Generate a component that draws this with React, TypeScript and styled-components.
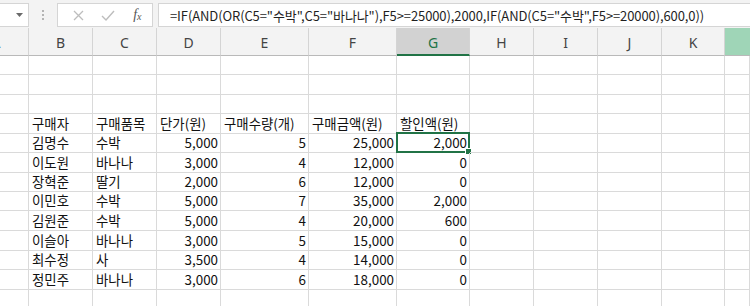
import styled, { createGlobalStyle, css } from 'styled-components';

const GlobalStyle = createGlobalStyle`
  html, body {
    margin: 0;
    padding: 0;
    background: #ffffff;
  }
  body {
    font-family: "Noto Sans CJK KR", "Noto Sans", sans-serif;
  }
`;

const COLUMNS = [
  { key: 'A', width: '29px' },
  { key: 'B', width: '64px' },
  { key: 'C', width: '64px' },
  { key: 'D', width: '64px' },
  { key: 'E', width: '88px' },
  { key: 'F', width: '88px' },
  { key: 'G', width: '73px' },
  { key: 'H', width: '64px' },
  { key: 'I', width: '64px' },
  { key: 'J', width: '64px' },
  { key: 'K', width: '63px' },
  { key: 'L', width: '1fr' },
];

const ROW_HEIGHTS = [19, 20, 19, 20, 19, 20, 19, 19, 20, 20, 19, 20, 20];

const FORMULA =
  '=IF(AND(OR(C5="수박",C5="바나나"),F5>=25000),2000,IF(AND(C5="수박",F5>=20000),600,0))';

type Align = 'left' | 'right';

interface CellData {
  text: string;
  align: Align;
}

const HEADERS = ['구매자', '구매품목', '단가(원)', '구매수량(개)', '구매금액(원)', '할인액(원)'];

const RECORDS: [string, string, string, string, string, string][] = [
  ['김명수', '수박', '5,000', '5', '25,000', '2,000'],
  ['이도원', '바나나', '3,000', '4', '12,000', '0'],
  ['장혁준', '딸기', '2,000', '6', '12,000', '0'],
  ['이민호', '수박', '5,000', '7', '35,000', '2,000'],
  ['김원준', '수박', '5,000', '4', '20,000', '600'],
  ['이슬아', '바나나', '3,000', '5', '15,000', '0'],
  ['최수정', '사', '3,500', '4', '14,000', '0'],
  ['정민주', '바나나', '3,000', '6', '18,000', '0'],
];

// row number (1-based) -> cells in columns B..G
function buildRows(): Record<number, CellData[]> {
  const rows: Record<number, CellData[]> = {};
  rows[4] = HEADERS.map((text) => ({ text, align: 'left' as Align }));
  RECORDS.forEach((rec, i) => {
    rows[5 + i] = rec.map((text, c) => ({ text, align: (c < 2 ? 'left' : 'right') as Align }));
  });
  return rows;
}

const ROWS = buildRows();

function CancelIcon() {
  return (
    <svg width="11" height="11" viewBox="0 0 11 11">
      <path d="M1 1 L10 10 M10 1 L1 10" stroke="#bdbdbd" strokeWidth="1.3" fill="none" />
    </svg>
  );
}

function EnterIcon() {
  return (
    <svg width="14" height="11" viewBox="0 0 14 11">
      <path d="M1 6 L5 10 L13 1" stroke="#bdbdbd" strokeWidth="1.4" fill="none" />
    </svg>
  );
}

function DropArrow() {
  return (
    <svg width="7" height="4" viewBox="0 0 7 4">
      <path d="M0 0 L7 0 L3.5 4 Z" fill="#6a6a6a" />
    </svg>
  );
}

export default function App() {
  return (
    <>
      <GlobalStyle />
      <Window>
        <FormulaBar>
          <NameBox>
            <DropArrow />
          </NameBox>
          <Grip>
            <span />
            <span />
            <span />
          </Grip>
          <ActionBox>
            <ActionButton>
              <CancelIcon />
            </ActionButton>
            <ActionButton>
              <EnterIcon />
            </ActionButton>
            <ActionButton>
              <Fx>
                f<sub>x</sub>
              </Fx>
            </ActionButton>
          </ActionBox>
          <FormulaInput>{FORMULA}</FormulaInput>
        </FormulaBar>

        <Sheet>
          {COLUMNS.map((col) => (
            <ColHeader
              key={col.key}
              $selected={col.key === 'G'}
              $highlight={col.key === 'L'}
              $clipped={col.key === 'A'}
            >
              {col.key === 'A' ? <ClippedLabel>A</ClippedLabel> : col.key === 'L' ? null : col.key}
            </ColHeader>
          ))}
          {ROW_HEIGHTS.map((_, r) => {
            const rowNum = r + 1;
            const data = ROWS[rowNum];
            return COLUMNS.map((col, c) => {
              const cell = data && c >= 1 && c <= 6 ? data[c - 1] : undefined;
              const active = rowNum === 5 && col.key === 'G';
              return (
                <Cell key={`${rowNum}-${col.key}`} $align={cell ? cell.align : 'left'}>
                  {cell ? cell.text : null}
                  {active && (
                    <Selection>
                      <FillHandle />
                    </Selection>
                  )}
                </Cell>
              );
            });
          })}
        </Sheet>
      </Window>
    </>
  );
}

const Window = styled.div`
  width: 750px;
  height: 306px;
  overflow: hidden;
  background: #ffffff;
`;

const FormulaBar = styled.div`
  display: flex;
  align-items: stretch;
  height: 28px;
  box-sizing: border-box;
  padding: 3px 0 1px 0;
  background: #f3f3f3;
`;

const NameBox = styled.div`
  width: 29px;
  box-sizing: border-box;
  background: #ffffff;
  border: 1px solid #d5d5d5;
  border-left: none;
  display: flex;
  align-items: center;
  justify-content: flex-end;
  padding-right: 5px;
  padding-bottom: 1px;
`;

const Grip = styled.div`
  width: 28px;
  display: flex;
  flex-direction: column;
  align-items: center;
  justify-content: center;
  gap: 2px;

  span {
    width: 2px;
    height: 2px;
    background: #b4b4b4;
  }
`;

const ActionBox = styled.div`
  width: 96px;
  box-sizing: border-box;
  background: #ffffff;
  border: 1px solid #d5d5d5;
  display: flex;
  align-items: center;
  padding-left: 6px;
`;

const ActionButton = styled.div`
  width: 31px;
  display: flex;
  align-items: center;
  justify-content: center;
`;

const Fx = styled.span`
  font-family: "Liberation Serif", "DejaVu Serif", serif;
  font-style: italic;
  font-size: 14px;
  color: #555555;
  line-height: 1;

  sub {
    font-size: 10px;
    vertical-align: -1px;
  }
`;

const FormulaInput = styled.div`
  flex: 1;
  margin-left: 5px;
  box-sizing: border-box;
  background: #ffffff;
  border: 1px solid #d5d5d5;
  border-right: none;
  padding-left: 11px;
  display: flex;
  align-items: center;
  font-size: 13px;
  letter-spacing: -0.1px;
  color: #1f1f1f;
  white-space: nowrap;
  overflow: hidden;
`;

const Sheet = styled.div`
  display: grid;
  grid-template-columns: ${COLUMNS.map((c) => c.width).join(' ')};
  grid-template-rows: 28px ${ROW_HEIGHTS.map((h) => `${h}px`).join(' ')};
`;

const ColHeader = styled.div<{ $selected?: boolean; $highlight?: boolean; $clipped?: boolean }>`
  box-sizing: border-box;
  background: #f3f3f3;
  border-right: 1px solid #d4d4d4;
  border-bottom: 1px solid #b9b9b9;
  display: flex;
  align-items: center;
  justify-content: ${(p) => (p.$clipped ? 'flex-end' : 'center')};
  font-family: "Noto Sans", "Open Sans", sans-serif;
  font-size: 14px;
  color: #444444;
  padding-top: 1px;
  overflow: hidden;

  ${(p) =>
    p.$selected &&
    css`
      background: #d2d2d2;
      border-bottom: 2px solid #217346;
      color: #217346;
      padding-top: 2px;
    `}

  ${(p) =>
    p.$highlight &&
    css`
      background: #9fd5b7;
      border-right: none;
    `}
`;

const ClippedLabel = styled.span`
  flex: none;
  width: 64px;
  text-align: center;
`;

const Cell = styled.div<{ $align: Align }>`
  position: relative;
  box-sizing: border-box;
  border-right: 1px solid #dadada;
  border-bottom: 1px solid #dadada;
  display: flex;
  align-items: center;
  justify-content: ${(p) => (p.$align === 'right' ? 'flex-end' : 'flex-start')};
  padding: 0 ${(p) => (p.$align === 'right' ? '2px' : '0')} 0 ${(p) => (p.$align === 'right' ? '0' : '3px')};
  font-size: 13.4px;
  color: #111111;
  white-space: nowrap;
  line-height: 1;
`;

const Selection = styled.div`
  position: absolute;
  top: -2px;
  left: -1px;
  right: -1px;
  bottom: -1px;
  border: 2px solid #217346;
  pointer-events: none;
`;

const FillHandle = styled.div`
  position: absolute;
  right: -4px;
  bottom: -4px;
  width: 5px;
  height: 5px;
  background: #217346;
  border: 1px solid #ffffff;
`;
